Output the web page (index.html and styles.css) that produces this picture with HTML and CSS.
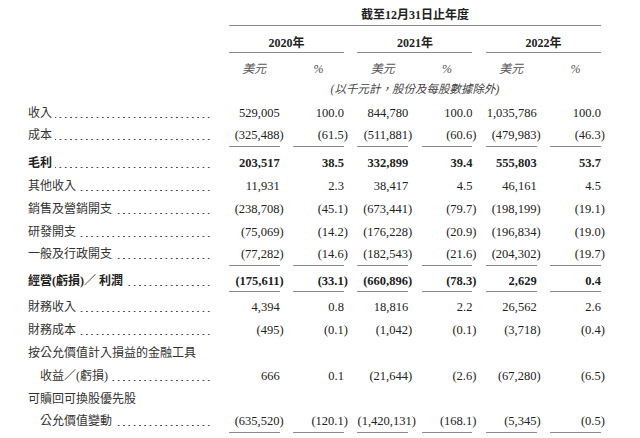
FILE: index.html
```html
<!DOCTYPE html>
<html lang="zh-Hant">
<head>
<meta charset="utf-8">
<link rel="stylesheet" href="styles.css">
</head>
<body>
<div class="table">
  <div class="hrow">
    <div class="blank"></div>
    <div class="period">截至12月31日止年度</div>
  </div>
  <div class="hrow yrow">
    <div class="blank"></div>
    <div class="year">2020年</div>
    <div class="year">2021年</div>
    <div class="year">2022年</div>
  </div>
  <div class="hrow urow">
    <div class="blank"></div>
    <div class="unit">美元</div><div class="unit">%</div>
    <div class="unit">美元</div><div class="unit">%</div>
    <div class="unit">美元</div><div class="unit">%</div>
  </div>
  <div class="hrow nrow">
    <div class="blank"></div>
    <div class="note">(以千元計，股份及每股數據除外)</div>
  </div>

  <div class="row first">
    <div class="lab"><span class="lt">收入</span><span class="dots"></span></div>
    <div class="v">529,005</div><div class="v">100.0</div><div class="v">844,780</div><div class="v">100.0</div><div class="v">1,035,786</div><div class="v">100.0</div>
  </div>
  <div class="row u">
    <div class="lab"><span class="lt">成本</span><span class="dots"></span></div>
    <div class="v"><span class="n">(325,488)</span></div><div class="v"><span class="n">(61.5)</span></div><div class="v"><span class="n">(511,881)</span></div><div class="v"><span class="n">(60.6)</span></div><div class="v"><span class="n">(479,983)</span></div><div class="v"><span class="n">(46.3)</span></div>
  </div>
  <div class="row b after">
    <div class="lab"><span class="lt">毛利</span><span class="dots"></span></div>
    <div class="v">203,517</div><div class="v">38.5</div><div class="v">332,899</div><div class="v">39.4</div><div class="v">555,803</div><div class="v">53.7</div>
  </div>
  <div class="row">
    <div class="lab"><span class="lt">其他收入</span><span class="dots"></span></div>
    <div class="v">11,931</div><div class="v">2.3</div><div class="v">38,417</div><div class="v">4.5</div><div class="v">46,161</div><div class="v">4.5</div>
  </div>
  <div class="row">
    <div class="lab"><span class="lt">銷售及營銷開支</span><span class="dots"></span></div>
    <div class="v"><span class="n">(238,708)</span></div><div class="v"><span class="n">(45.1)</span></div><div class="v"><span class="n">(673,441)</span></div><div class="v"><span class="n">(79.7)</span></div><div class="v"><span class="n">(198,199)</span></div><div class="v"><span class="n">(19.1)</span></div>
  </div>
  <div class="row">
    <div class="lab"><span class="lt">研發開支</span><span class="dots"></span></div>
    <div class="v"><span class="n">(75,069)</span></div><div class="v"><span class="n">(14.2)</span></div><div class="v"><span class="n">(176,228)</span></div><div class="v"><span class="n">(20.9)</span></div><div class="v"><span class="n">(196,834)</span></div><div class="v"><span class="n">(19.0)</span></div>
  </div>
  <div class="row u">
    <div class="lab"><span class="lt">一般及行政開支</span><span class="dots"></span></div>
    <div class="v"><span class="n">(77,282)</span></div><div class="v"><span class="n">(14.6)</span></div><div class="v"><span class="n">(182,543)</span></div><div class="v"><span class="n">(21.6)</span></div><div class="v"><span class="n">(204,302)</span></div><div class="v"><span class="n">(19.7)</span></div>
  </div>
  <div class="row b u tight after">
    <div class="lab"><span class="lt">經營(虧損)／ 利潤</span><span class="dots"></span></div>
    <div class="v"><span class="n">(175,611)</span></div><div class="v"><span class="n">(33.1)</span></div><div class="v"><span class="n">(660,896)</span></div><div class="v"><span class="n">(78.3)</span></div><div class="v">2,629</div><div class="v">0.4</div>
  </div>
  <div class="row after4">
    <div class="lab"><span class="lt">財務收入</span><span class="dots"></span></div>
    <div class="v">4,394</div><div class="v">0.8</div><div class="v">18,816</div><div class="v">2.2</div><div class="v">26,562</div><div class="v">2.6</div>
  </div>
  <div class="row">
    <div class="lab"><span class="lt">財務成本</span><span class="dots"></span></div>
    <div class="v"><span class="n">(495)</span></div><div class="v"><span class="n">(0.1)</span></div><div class="v"><span class="n">(1,042)</span></div><div class="v"><span class="n">(0.1)</span></div><div class="v"><span class="n">(3,718)</span></div><div class="v"><span class="n">(0.4)</span></div>
  </div>
  <div class="row">
    <div class="lab"><span class="lt">按公允價值計入損益的金融工具</span></div>
  </div>
  <div class="row">
    <div class="lab ind"><span class="lt">收益／(虧損)</span><span class="dots"></span></div>
    <div class="v">666</div><div class="v">0.1</div><div class="v"><span class="n">(21,644)</span></div><div class="v"><span class="n">(2.6)</span></div><div class="v"><span class="n">(67,280)</span></div><div class="v"><span class="n">(6.5)</span></div>
  </div>
  <div class="row">
    <div class="lab"><span class="lt">可贖回可換股優先股</span></div>
  </div>
  <div class="row u">
    <div class="lab ind"><span class="lt">公允價值變動</span><span class="dots"></span></div>
    <div class="v"><span class="n">(635,520)</span></div><div class="v"><span class="n">(120.1)</span></div><div class="v"><span class="n">(1,420,131)</span></div><div class="v"><span class="n">(168.1)</span></div><div class="v"><span class="n">(5,345)</span></div><div class="v"><span class="n">(0.5)</span></div>
  </div>
</div>
</body>
</html>
```

FILE: styles.css
```css
html, body {
  margin: 0;
  background: #ffffff;
}
body {
  color: #222222;
  font-family: "Liberation Serif", "Noto Sans CJK TC", serif;
  font-size: 12px;
}
.hrow, .row {
  display: grid;
  grid-template-columns: 215.4px repeat(6, 50.67px);
  column-gap: 13.6px;
}
.period {
  grid-column: 2 / 8;
  text-align: center;
  font-weight: bold;
  padding-top: 5px;
  line-height: 20px;
  border-bottom: 1px solid #8a8a8a;
  color: #222;
}
.year {
  grid-column: span 2;
  text-align: center;
  font-weight: bold;
  padding-top: 8px;
  line-height: 18px;
  border-bottom: 1px solid #8a8a8a;
  color: #222;
}
.unit {
  text-align: center;
  font-style: italic;
  padding-top: 5px;
  line-height: 22px;
  color: #555;
}
.note {
  grid-column: 2 / 8;
  text-align: center;
  font-style: italic;
  font-size: 11.5px;
  line-height: 18px;
  color: #444;
}
.row {
  height: 23px;
  line-height: 23px;
}
.row.first {
  margin-top: 4px;
}
.row.after {
  margin-top: 5px;
}
.row.after4 {
  margin-top: 4px;
}
.row.u {
  height: 22px;
  line-height: 21px;
}
.row.u.tight {
  height: 21px;
  line-height: 20px;
}
.row.u .v {
  border-bottom: 1px solid #8a8a8a;
}
.lab {
  display: flex;
  padding-left: 28px;
  padding-right: 4px;
  color: #333;
  min-width: 0;
}
.lab.ind {
  padding-left: 40px;
}
.lt {
  flex: none;
  white-space: nowrap;
}
.dots {
  flex: 1;
  min-width: 0;
  margin-left: 3px;
  background-image: radial-gradient(circle at center, #4a4a4a 0, #4a4a4a 0.7px, rgba(74,74,74,0) 1.1px);
  background-size: 5.3px 3px;
  background-repeat: repeat-x;
  background-position: right 0 top 14px;
}
.row.u .dots {
  background-position: right 0 top 13px;
}
.row.u.tight .dots {
  background-position: right 0 top 12.5px;
}
.v {
  text-align: right;
  white-space: nowrap;
  font-size: 12.5px;
}
.n {
  margin-right: -4px;
}
.row.b {
  font-weight: bold;
}
.row.b .lab {
  color: #222;
}
```
